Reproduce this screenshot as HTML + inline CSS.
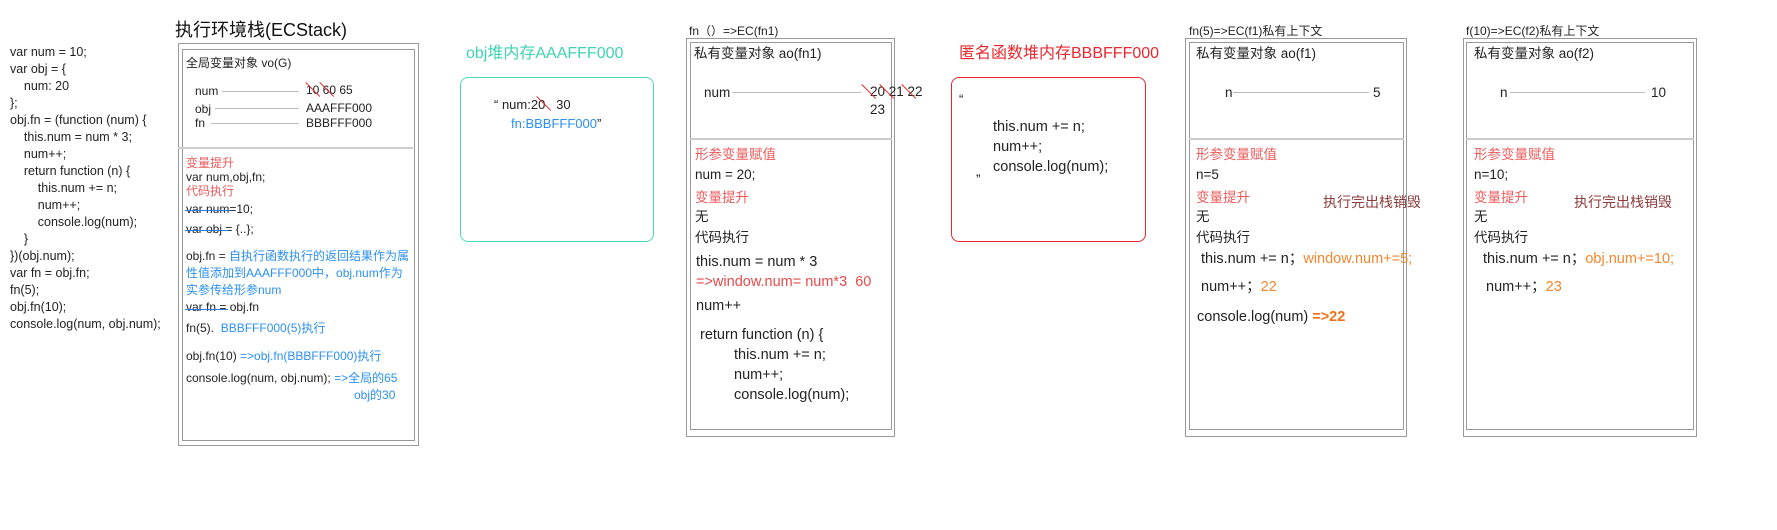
<!DOCTYPE html>
<html><head><meta charset="utf-8"><style>
body{margin:0;width:1777px;height:530px;background:#fff;position:relative;overflow:hidden;font-family:"Liberation Sans","Noto Sans CJK SC",sans-serif;color:#222}
.t{position:absolute;white-space:nowrap;font-size:12px;line-height:16px}
.b{position:absolute;border:1px solid #999;box-sizing:border-box}
.l{position:absolute;height:1px;background:#bbb}
.d{position:absolute;height:2px;background:#ccc}
.r{color:#ec5b5b}.bl{color:#2b90f0}.o{color:#f3862b}
.s{position:absolute;height:1px;background:#2b7de0}
.x{position:absolute;height:1px;background:#e03030;transform-origin:0 0}
.k .t{font-size:13.5px}
.k .m{font-size:14.5px}
</style></head><body>
<!-- left code -->
<div class="t" style="left:10px;top:44px;line-height:17px;font-size:12.5px">var num = 10;<br>var obj = {<br>&nbsp;&nbsp;&nbsp;&nbsp;num: 20<br>};<br>obj.fn = (function (num) {<br>&nbsp;&nbsp;&nbsp;&nbsp;this.num = num * 3;<br>&nbsp;&nbsp;&nbsp;&nbsp;num++;<br>&nbsp;&nbsp;&nbsp;&nbsp;return function (n) {<br>&nbsp;&nbsp;&nbsp;&nbsp;&nbsp;&nbsp;&nbsp;&nbsp;this.num += n;<br>&nbsp;&nbsp;&nbsp;&nbsp;&nbsp;&nbsp;&nbsp;&nbsp;num++;<br>&nbsp;&nbsp;&nbsp;&nbsp;&nbsp;&nbsp;&nbsp;&nbsp;console.log(num);<br>&nbsp;&nbsp;&nbsp;&nbsp;}<br>})(obj.num);<br>var fn = obj.fn;<br>fn(5);<br>obj.fn(10);<br>console.log(num, obj.num);</div>

<!-- ECStack -->
<div class="t" style="left:175px;top:19px;font-size:18px;line-height:22px;color:#111">执行环境栈(ECStack)</div>
<div class="b" style="left:178px;top:43px;width:241px;height:403px"></div>
<div class="b" style="left:182px;top:49px;width:233px;height:392px"></div>
<div class="t" style="left:186px;top:55px">全局变量对象 vo(G)</div>
<div class="t" style="left:195px;top:83px">num</div><div class="l" style="left:222px;top:91px;width:77px"></div>
<div class="t" style="left:306px;top:82px">10 60 65</div>
<div class="x" style="left:306px;top:82px;width:20px;transform:rotate(45deg)"></div>
<div class="x" style="left:320px;top:82px;width:20px;transform:rotate(45deg)"></div>
<div class="t" style="left:195px;top:101px">obj</div><div class="l" style="left:215px;top:108px;width:84px"></div>
<div class="t" style="left:306px;top:100px">AAAFFF000</div>
<div class="t" style="left:195px;top:115px">fn</div><div class="l" style="left:211px;top:123px;width:88px"></div>
<div class="t" style="left:306px;top:115px">BBBFFF000</div>
<div class="d" style="left:178px;top:147px;width:235px"></div>
<div class="t r" style="left:186px;top:155px">变量提升</div>
<div class="t" style="left:186px;top:169px">var num,obj,fn;</div>
<div class="t r" style="left:186px;top:183px">代码执行</div>
<div class="t" style="left:186px;top:201px">var num=10;</div><div class="s" style="left:185px;top:210px;width:45px"></div>
<div class="t" style="left:186px;top:221px">var obj = {..};</div><div class="s" style="left:185px;top:230px;width:43px"></div>
<div class="t" style="left:186px;top:248px;line-height:17px">obj.fn = <span class="bl">自执行函数执行的返回结果作为属<br>性值添加到AAAFFF000中，obj.num作为<br>实参传给形参num</span></div>
<div class="t" style="left:186px;top:299px">var fn = obj.fn</div><div class="s" style="left:185px;top:309px;width:43px"></div>
<div class="t" style="left:186px;top:320px">fn(5).&nbsp;&nbsp;<span class="bl">BBBFFF000(5)执行</span></div>
<div class="t" style="left:186px;top:348px">obj.fn(10) <span class="bl">=&gt;obj.fn(BBBFFF000)执行</span></div>
<div class="t" style="left:186px;top:370px">console.log(num, obj.num); <span class="bl">=&gt;全局的65</span></div>
<div class="t bl" style="left:354px;top:387px">obj的30</div>

<!-- obj heap -->
<div class="t" style="left:466px;top:44px;font-size:16px;line-height:20px;color:#3fd3b3">obj堆内存AAAFFF000</div>
<div class="b" style="left:460px;top:77px;width:194px;height:165px;border-color:#46d9b8;border-radius:8px"></div>
<div class="t" style="left:494px;top:97px;font-size:13px">“ num:20&nbsp;&nbsp;&nbsp;30</div>
<div class="x" style="left:537px;top:96px;width:20px;transform:rotate(45deg)"></div>
<div class="t" style="left:511px;top:116px;font-size:13px"><span class="bl">fn:BBBFFF000</span>”</div>

<div class="k">
<!-- fn1 -->
<div class="t" style="left:689px;top:24px;font-size:12px;line-height:14px">fn（）=&gt;EC(fn1)</div>
<div class="b" style="left:686px;top:38px;width:209px;height:399px"></div>
<div class="b" style="left:690px;top:42px;width:202px;height:388px"></div>
<div class="t" style="left:694px;top:46px">私有变量对象 ao(fn1)</div>
<div class="t" style="left:704px;top:85px">num</div><div class="l" style="left:732px;top:92px;width:129px"></div>
<div class="t" style="left:870px;top:84px">20&nbsp;21&nbsp;22</div>
<div class="x" style="left:862px;top:84px;width:20px;transform:rotate(45deg)"></div>
<div class="x" style="left:880px;top:84px;width:20px;transform:rotate(45deg)"></div>
<div class="x" style="left:902px;top:84px;width:20px;transform:rotate(45deg)"></div>
<div class="t" style="left:870px;top:102px">23</div>
<div class="d" style="left:690px;top:138px;width:202px"></div>
<div class="t r" style="left:695px;top:147px">形参变量赋值</div>
<div class="t" style="left:695px;top:167px">num = 20;</div>
<div class="t r" style="left:695px;top:190px">变量提升</div>
<div class="t" style="left:695px;top:209px">无</div>
<div class="t" style="left:695px;top:230px">代码执行</div>
<div class="t m" style="left:696px;top:254px">this.num = num * 3</div>
<div class="t m" style="left:696px;top:274px;color:#e84a4a">=&gt;window.num= num*3&nbsp;&nbsp;60</div>
<div class="t m" style="left:696px;top:298px">num++</div>
<div class="t m" style="left:700px;top:325px;line-height:20px">return function (n) {</div>
<div class="t m" style="left:734px;top:345px;line-height:20px">this.num += n;<br>num++;<br>console.log(num);</div>

<!-- anon heap -->
<div class="t" style="left:959px;top:44px;font-size:16px;line-height:20px;color:#e8282e">匿名函数堆内存BBBFFF000</div>
<div class="b" style="left:951px;top:77px;width:195px;height:165px;border-color:#e8282e;border-radius:8px"></div>
<div class="t" style="left:959px;top:92px">“</div>
<div class="t m" style="left:993px;top:117px;line-height:20px">this.num += n;<br>num++;<br>console.log(num);</div>
<div class="t" style="left:976px;top:172px">”</div>

<!-- f1 -->
<div class="t" style="left:1189px;top:24px;font-size:12px;line-height:14px">fn(5)=&gt;EC(f1)私有上下文</div>
<div class="b" style="left:1185px;top:38px;width:222px;height:399px"></div>
<div class="b" style="left:1189px;top:42px;width:215px;height:388px"></div>
<div class="t" style="left:1196px;top:46px">私有变量对象 ao(f1)</div>
<div class="t" style="left:1225px;top:85px">n</div><div class="l" style="left:1233px;top:92px;width:136px"></div>
<div class="t" style="left:1373px;top:85px">5</div>
<div class="d" style="left:1189px;top:138px;width:215px"></div>
<div class="t r" style="left:1196px;top:147px">形参变量赋值</div>
<div class="t" style="left:1196px;top:167px">n=5</div>
<div class="t r" style="left:1196px;top:190px">变量提升</div>
<div class="t" style="left:1323px;top:193px;font-size:14px;line-height:18px;color:#8e3b3b">执行完出栈销毁</div>
<div class="t" style="left:1196px;top:209px">无</div>
<div class="t" style="left:1196px;top:230px">代码执行</div>
<div class="t m" style="left:1201px;top:251px">this.num += n；<span class="o">window.num+=5;</span></div>
<div class="t m" style="left:1201px;top:279px">num++；<span class="o">22</span></div>
<div class="t m" style="left:1197px;top:309px">console.log(num) <b style="color:#f07018">=&gt;22</b></div>

<!-- f2 -->
<div class="t" style="left:1466px;top:24px;font-size:12px;line-height:14px">f(10)=&gt;EC(f2)私有上下文</div>
<div class="b" style="left:1463px;top:38px;width:234px;height:399px"></div>
<div class="b" style="left:1466px;top:42px;width:228px;height:388px"></div>
<div class="t" style="left:1474px;top:46px">私有变量对象 ao(f2)</div>
<div class="t" style="left:1500px;top:85px">n</div><div class="l" style="left:1510px;top:92px;width:135px"></div>
<div class="t" style="left:1651px;top:85px">10</div>
<div class="d" style="left:1466px;top:138px;width:228px"></div>
<div class="t r" style="left:1474px;top:147px">形参变量赋值</div>
<div class="t" style="left:1474px;top:167px">n=10;</div>
<div class="t r" style="left:1474px;top:190px">变量提升</div>
<div class="t" style="left:1574px;top:193px;font-size:14px;line-height:18px;color:#8e3b3b">执行完出栈销毁</div>
<div class="t" style="left:1474px;top:209px">无</div>
<div class="t" style="left:1474px;top:230px">代码执行</div>
<div class="t m" style="left:1483px;top:251px">this.num += n；<span class="o">obj.num+=10;</span></div>
<div class="t m" style="left:1486px;top:279px">num++；<span class="o">23</span></div>
</div>
</body></html>
